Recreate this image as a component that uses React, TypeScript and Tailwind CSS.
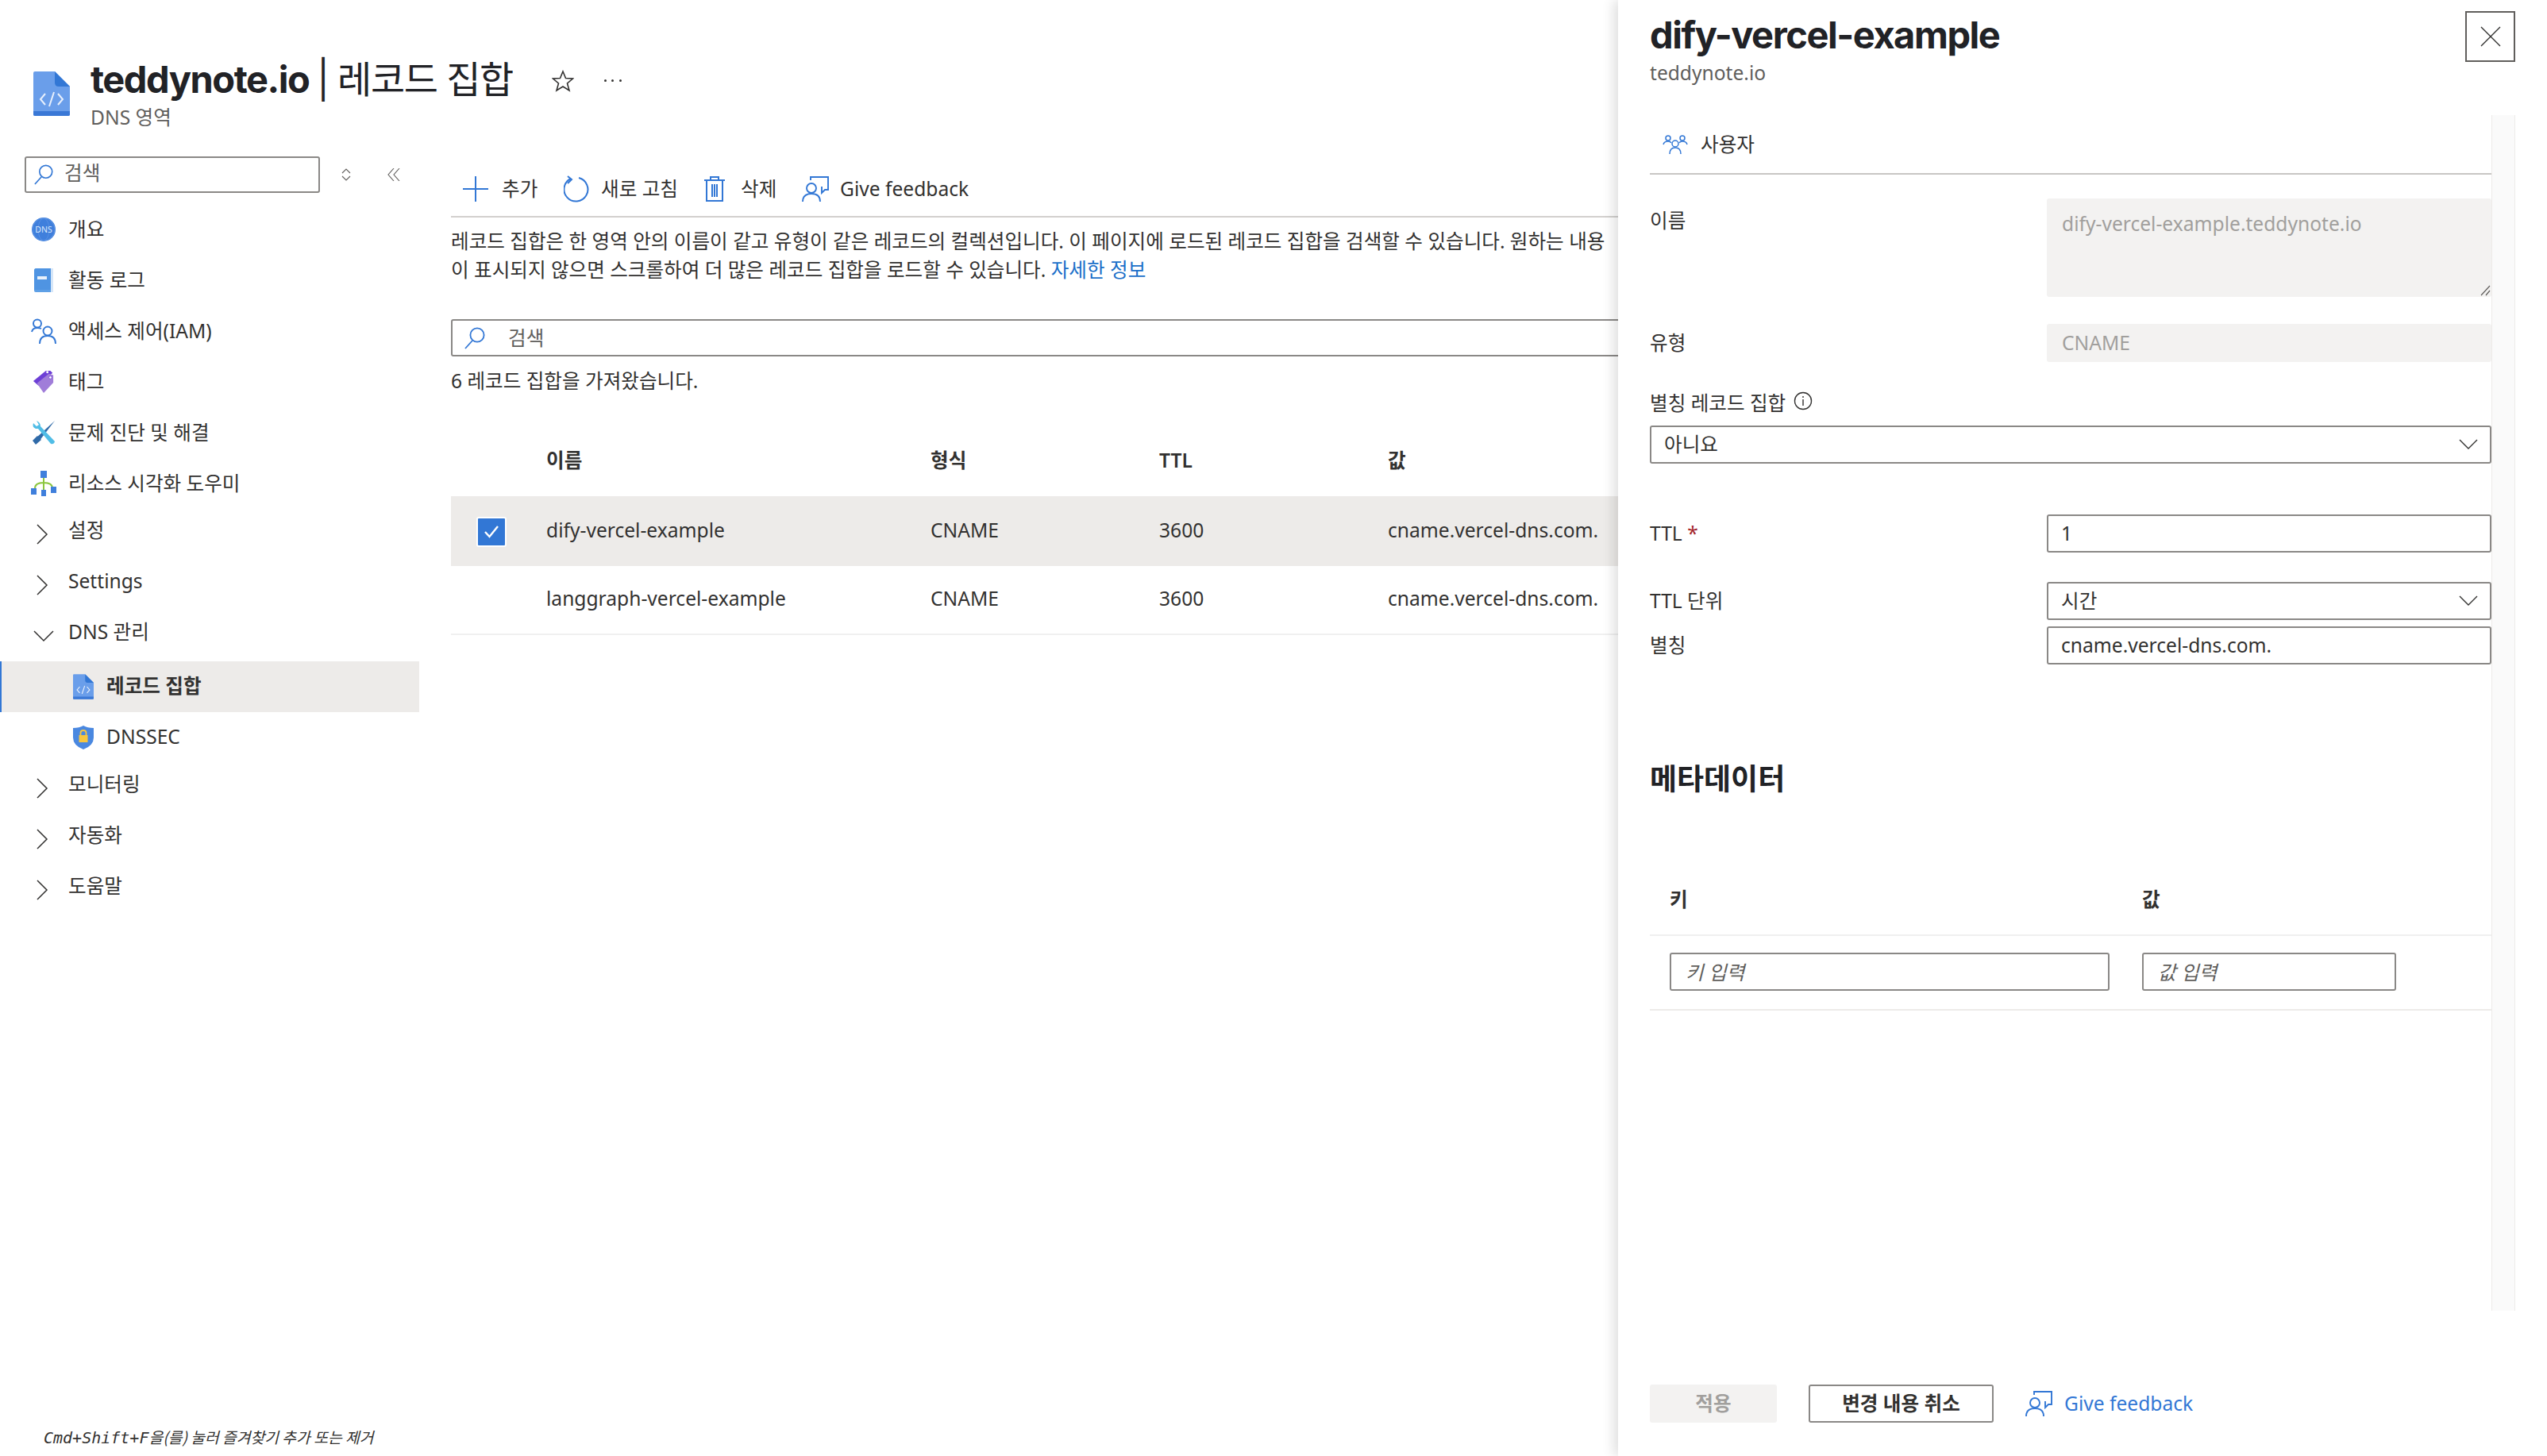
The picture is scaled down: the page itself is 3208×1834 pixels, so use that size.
import React from 'react';

const BLUE = '#3277d5';

function Magnifier({ className }: { className?: string }) {
  return (
    <svg viewBox="0 0 26 28" className={className} fill="none" stroke={BLUE} strokeWidth="1.8">
      <circle cx="16" cy="10" r="8.6" />
      <path d="M10 17 L1 27" />
    </svg>
  );
}

function Chevron({ dir, className }: { dir: 'right' | 'down'; className?: string }) {
  return (
    <svg viewBox="0 0 26 26" className={className} fill="none" stroke="#323130" strokeWidth="1.5">
      {dir === 'right' ? <path d="M7 1 L19 13 L7 25" /> : <path d="M1 7 L13 19 L25 7" />}
    </svg>
  );
}

function RecordIcon({ className }: { className?: string }) {
  return (
    <svg viewBox="0 0 46 56" className={className}>
      <path d="M0 2 Q0 0 2 0 H27 L46 19 V54 Q46 56 44 56 H2 Q0 56 0 54 Z" fill="#6a9eea" />
      <path d="M0 50 H46 V54 Q46 56 44 56 H2 Q0 56 0 54 Z" fill="#3a78d6" />
      <path d="M27 0 L46 19 H32 Q27 19 27 14 Z" fill="#3277d5" />
      <path d="M15 28 L9 35 L15 42 M31 28 L37 35 L31 42 M26 26 L20 44" fill="none" stroke="#e8f0fc" strokeWidth="2" />
    </svg>
  );
}

function DnsIcon() {
  return (
    <svg viewBox="0 0 30 30" className="w-[30px] h-[30px]">
      <circle cx="15" cy="15" r="15" fill="#3f7fdc" />
      <circle cx="15" cy="15" r="14" fill="none" stroke="#5b93e4" strokeWidth="1" />
      <ellipse cx="15" cy="15" rx="7" ry="14" fill="none" stroke="#5b93e4" strokeWidth="0.8" />
      <text x="15" y="19" textAnchor="middle" fontSize="10.5" fill="#dce9fb" fontFamily="Noto Sans, sans-serif">DNS</text>
    </svg>
  );
}

function BookIcon() {
  return (
    <svg viewBox="0 0 26 30" className="w-[26px] h-[30px]">
      <path d="M1 3 Q1 0 4 0 H25 V30 H3 Q1 30 1 28 Z" fill="#5ea0e6" />
      <path d="M4 0 H25 V30 H22 V2 H4 Z" fill="#d5e6f8" />
      <path d="M1 3 Q1 0 4 0 H22 V27 H1 Z" fill="#4f94e2" />
      <rect x="5" y="10" width="12" height="4" fill="#e8f1fb" />
    </svg>
  );
}

function PeopleIcon() {
  return (
    <svg viewBox="0 0 32 32" className="w-[32px] h-[32px]" fill="none" stroke={BLUE} strokeWidth="1.9">
      <circle cx="8" cy="6.5" r="5" />
      <path d="M1 17 Q2 12 8 12 Q11 12 13 13" />
      <circle cx="21" cy="16" r="5.5" />
      <path d="M11 32 Q11 22 21 22 Q31 22 31 32" />
    </svg>
  );
}

function TagIcon() {
  return (
    <svg viewBox="0 0 30 32" className="w-[28px] h-[30px]">
      <path d="M1 15 L18 1 L24 1 L27 4 L8 21 Z" fill="#6d3fd6" />
      <path d="M6 18 L22 5 L28 7 L28 17 L15 31 Z" fill="#a07dd9" />
      <circle cx="24" cy="10" r="2" fill="#fff" stroke="#6d3fd6" strokeWidth="0.8" />
      <circle cx="20" cy="3" r="1.6" fill="#fff" />
    </svg>
  );
}

function ToolsIcon() {
  return (
    <svg viewBox="0 0 30 30" className="w-[30px] h-[30px]">
      <path d="M29 0 L5 22 L9 26 Z" fill="#2f6aa8" />
      <path d="M1 25 L7 19 L12 24 L5 30 Z" fill="#2f6aa8" />
      <path d="M2 3 Q0 8 5 10 L8 10 L24 29 Q28 30 29 26 L11 7 Q11 2 6 0 L9 5 L6 7 Z" fill="#50bde6" />
    </svg>
  );
}

function TreeIcon() {
  return (
    <svg viewBox="0 0 32 32" className="w-[32px] h-[32px]">
      <path d="M16 8 V25 M5 22 Q5 15 16 15 Q27 15 27 22" fill="none" stroke="#8cc63f" strokeWidth="2" />
      <rect x="12" y="0" width="8" height="9" fill="#3f7fdc" />
      <rect x="0" y="22" width="7" height="8" fill="#3f7fdc" />
      <rect x="25" y="20" width="7" height="8" fill="#3f7fdc" />
      <rect x="13" y="24" width="6" height="8" fill="#3f7fdc" />
    </svg>
  );
}

function ShieldIcon() {
  return (
    <svg viewBox="0 0 26 30" className="w-[26px] h-[30px]">
      <path d="M13 0 Q18 3 26 3 V15 Q26 25 13 30 Q0 25 0 15 V3 Q8 3 13 0 Z" fill="#4a88e0" />
      <rect x="7.5" y="12" width="11" height="9" fill="#f8c63d" />
      <path d="M9.5 12 V9 Q9.5 6 13 6 Q16.5 6 16.5 9 V12" fill="none" stroke="#f8c63d" strokeWidth="1.8" />
    </svg>
  );
}

function FeedbackIcon({ className }: { className?: string }) {
  return (
    <svg viewBox="0 0 34 32" className={className} fill="none" stroke={BLUE} strokeWidth="1.9">
      <circle cx="12" cy="15" r="6" />
      <path d="M1 32 Q1 22 12 22 Q23 22 23 32" />
      <path d="M11 5 V1 H33 V17 H29 L25 21 V13" />
    </svg>
  );
}

function UsersIcon() {
  return (
    <svg viewBox="0 0 32 24" className="w-[32px] h-[24px]" fill="none" stroke={BLUE} strokeWidth="1.5">
      <circle cx="7" cy="4" r="3" />
      <path d="M1 12 Q2 8 7 8 Q10 8 11 10" />
      <circle cx="25" cy="4" r="3" />
      <path d="M31 12 Q30 8 25 8 Q22 8 21 10" />
      <circle cx="16" cy="11" r="4" />
      <path d="M9 24 Q9 16 16 16 Q23 16 23 24" />
    </svg>
  );
}

const navRows = [
  { label: '개요', icon: <DnsIcon /> },
  { label: '활동 로그', icon: <BookIcon /> },
  { label: '액세스 제어(IAM)', icon: <PeopleIcon /> },
  { label: '태그', icon: <TagIcon /> },
  { label: '문제 진단 및 해결', icon: <ToolsIcon /> },
  { label: '리소스 시각화 도우미', icon: <TreeIcon /> },
  { label: '설정', chevron: 'right' as const },
  { label: 'Settings', chevron: 'right' as const },
  { label: 'DNS 관리', chevron: 'down' as const },
  { label: '레코드 집합', sub: true, selected: true, icon: <RecordIcon className="w-[26px] h-[32px]" /> },
  { label: 'DNSSEC', sub: true, icon: <ShieldIcon /> },
  { label: '모니터링', chevron: 'right' as const },
  { label: '자동화', chevron: 'right' as const },
  { label: '도움말', chevron: 'right' as const },
];

function Sidebar() {
  return (
    <div className="w-[528px] shrink-0 flex flex-col">
      <div className="flex items-center h-[46px] pl-[31px]">
        <div className="w-[372px] h-[46px] border-2 border-[#8a8886] rounded-[3px] flex items-center pl-[10px]">
          <Magnifier className="w-[24px] h-[26px]" />
          <span className="ml-[14px] -mt-[5px] text-[#605e5c]">검색</span>
        </div>
        <svg viewBox="0 0 12 16" className="w-[12px] h-[16px] ml-[27px]" fill="none" stroke="#605e5c" strokeWidth="1.1">
          <path d="M1 6 L6 1 L11 6 M1 10 L6 15 L11 10" />
        </svg>
        <svg viewBox="0 0 16 16" className="w-[16px] h-[16px] ml-[46px]" fill="none" stroke="#605e5c" strokeWidth="1.1">
          <path d="M8 0 L1 8 L8 16 M15 0 L8 8 L15 16" />
        </svg>
      </div>
      <div className="mt-[14px] flex flex-col">
        {navRows.map((row) => (
          <div
            key={row.label}
            className={
              row.selected
                ? 'h-[64px] flex items-center bg-[#edebe9] border-l-2 border-[#3277d5] pl-[86px] font-semibold'
                : row.sub
                  ? 'h-[64px] flex items-center pl-[88px]'
                  : 'h-[64px] flex items-center pl-[38px]'
            }
          >
            <span className="w-[34px] flex justify-center shrink-0">
              {row.chevron ? (
                <Chevron
                  dir={row.chevron}
                  className={row.chevron === 'right' ? 'w-[26px] h-[26px] mr-[5px]' : 'w-[26px] h-[26px]'}
                />
              ) : (
                row.icon
              )}
            </span>
            <span className={row.sub ? 'ml-[12px] -mt-[3px]' : row.chevron ? 'ml-[14px] -mt-[10px]' : 'ml-[14px] -mt-[1px]'}>
              {row.label}
            </span>
          </div>
        ))}
      </div>
      <div className="mt-auto mb-[13px] pl-[55px] text-[20px] leading-[20px] italic whitespace-nowrap font-['DejaVu_Sans_Mono','Noto_Sans_CJK_KR',monospace] text-[#323130]">
        Cmd+Shift+F<span className="text-[19.300px] font-['Noto_Sans_CJK_KR',sans-serif]">을(를) 눌러 즐겨찾기 추가 또는 제거</span>
      </div>
    </div>
  );
}

function RecordTable() {
  const rows = [
    { name: 'dify-vercel-example', selected: true },
    { name: 'langgraph-vercel-example', selected: false },
  ];
  return (
    <div className="w-[1600px] mt-[37px]">
      <div className="h-[90px] pb-[1px] flex items-center font-semibold">
        <span className="ml-[120px] w-[484px]">이름</span>
        <span className="w-[288px]">형식</span>
        <span className="w-[288px]">TTL</span>
        <span>값</span>
      </div>
      {rows.map((r) => (
        <div
          key={r.name}
          className={
            r.selected
              ? 'h-[88px] flex items-center bg-[#edebe9]'
              : 'h-[87px] flex items-center border-b-2 border-[#f0f0f0]'
          }
        >
          <span className="w-[120px] pl-[32px] mt-[2px] shrink-0">
            {r.selected && (
              <span className="w-[38px] h-[38px] rounded-[3px] bg-[#3277d5] border-2 border-white flex items-center justify-center">
                <svg viewBox="0 0 18 16" className="w-[18px] h-[16px]" fill="none" stroke="#fff" strokeWidth="2.4">
                  <path d="M1 8 L6.5 14 L17 1" />
                </svg>
              </span>
            )}
          </span>
          <span className="w-[484px] -mt-[3px]">{r.name}</span>
          <span className="w-[288px] -mt-[3px]">CNAME</span>
          <span className="w-[288px] -mt-[3px]">3600</span>
          <span className="-mt-[3px]">cname.vercel-dns.com.</span>
        </div>
      ))}
    </div>
  );
}

function Content() {
  return (
    <div className="flex-1 min-w-0 pl-[40px] overflow-hidden">
      <div className="h-[77px] pt-[6px] w-[1600px] border-b-2 border-[#d2d0ce] flex items-center">
        <svg viewBox="0 0 32 32" className="w-[32px] h-[32px] ml-[15px]" fill="none" stroke={BLUE} strokeWidth="2">
          <path d="M16 0 V32 M0 16 H32" />
        </svg>
        <span className="ml-[17px] w-[76px]">추가</span>
        <svg viewBox="0 0 32 34" className="w-[32px] h-[34px] ml-[2px]" fill="none" stroke={BLUE} strokeWidth="2">
          <path d="M19 3 A15 15 0 1 1 9 4" />
          <path d="M5 1 L10 5 L5 10" />
        </svg>
        <span className="ml-[15px] w-[130px]">새로 고침</span>
        <svg viewBox="0 0 26 32" className="w-[26px] h-[32px]" fill="none" stroke={BLUE} strokeWidth="2">
          <path d="M0 5 H26 M8 5 V1 H18 V5 M3 5 V31 H23 V5 M10 10 V26 M13 10 V26 M16 10 V26" />
        </svg>
        <span className="ml-[20px] w-[77px]">삭제</span>
        <FeedbackIcon className="w-[34px] h-[32px]" />
        <span className="ml-[14px]">Give feedback</span>
      </div>
      <div className="mt-[12px] leading-[36px] whitespace-nowrap">
        <div>레코드 집합은 한 영역 안의 이름이 같고 유형이 같은 레코드의 컬렉션입니다. 이 페이지에 로드된 레코드 집합을 검색할 수 있습니다. 원하는 내용</div>
        <div>
          이 표시되지 않으면 스크롤하여 더 많은 레코드 집합을 로드할 수 있습니다.{' '}
          <span className="text-[#1a6fc9]">자세한 정보</span>
        </div>
      </div>
      <div className="w-[1600px] h-[47px] mt-[44px] border-2 border-[#8a8886] rounded-[3px] flex items-center pl-[15px]">
        <Magnifier className="w-[26px] h-[28px]" />
        <span className="ml-[29px] text-[#605e5c]">검색</span>
      </div>
      <div className="mt-[13px] leading-[36px]">6 레코드 집합을 가져왔습니다.</div>
      <RecordTable />
    </div>
  );
}

function Field({ label, children, className }: { label: React.ReactNode; children: React.ReactNode; className?: string }) {
  return (
    <div className={`flex items-start ${className ?? ''}`}>
      <div className="w-[500px] shrink-0 h-[48px] flex items-center">{label}</div>
      <div className="w-[560px]">{children}</div>
    </div>
  );
}

function Box({ children, chevron, className }: { children?: React.ReactNode; chevron?: boolean; className?: string }) {
  return (
    <div className={`h-[48px] border-2 border-[#8a8886] rounded-[3px] flex items-center justify-between px-[16px] ${className ?? ''}`}>
      <span>{children}</span>
      {chevron && (
        <svg viewBox="0 0 24 14" className="w-[24px] h-[14px] -mr-[1px]" fill="none" stroke="#323130" strokeWidth="1.4">
          <path d="M1 1 L12 12 L23 1" />
        </svg>
      )}
    </div>
  );
}

function DetailPanel() {
  return (
    <div className="w-[1170px] shrink-0 bg-white shadow-[-6px_0_14px_rgba(0,0,0,0.12)] flex flex-col pl-[40px] relative">
      <div className="h-[145px] flex items-start justify-between pr-[40px]">
        <div>
          <div className="mt-[16px] text-[47px] leading-[56px] font-bold tracking-[-1.45px] text-[#212226] font-['Inter',sans-serif]">
            dify-vercel-example
          </div>
          <div className="mt-[4px] text-[#605e5c] leading-[32px]">teddynote.io</div>
        </div>
        <button className="w-[63px] h-[64px] mt-[14px] border-2 border-[#605e5c] flex items-center justify-center">
          <svg viewBox="0 0 26 26" className="w-[26px] h-[26px]" fill="none" stroke="#323130" strokeWidth="1.4">
            <path d="M1 1 L25 25 M25 1 L1 25" />
          </svg>
        </button>
      </div>
      <div className="flex h-[1506px]">
        <div className="w-[1060px] shrink-0">
          <div className="h-[75px] border-b-2 border-[#c8c6c4] flex items-center pl-[16px]">
            <UsersIcon />
            <span className="ml-[16px]">사용자</span>
          </div>
          <div className="flex items-start mt-[30px]">
            <div className="w-[500px] shrink-0 pt-[10px] leading-[36px]">이름</div>
            <div className="w-[560px] h-[124px] bg-[#f3f2f1] rounded-[3px] px-[19px] pt-[14px] leading-[36px] text-[#a19f9d] relative">
              dify-vercel-example.teddynote.io
              <svg viewBox="0 0 14 14" className="absolute right-[1px] bottom-[1px] w-[14px] h-[14px]" fill="none" stroke="#605e5c" strokeWidth="1.2">
                <path d="M2 13 L13 1 M8 13 L13 7" />
              </svg>
            </div>
          </div>
          <Field label="유형" className="mt-[34px]">
            <div className="h-[48px] bg-[#f3f2f1] rounded-[3px] px-[19px] flex items-center text-[#a19f9d]">CNAME</div>
          </Field>
          <div className="mt-[28px] mb-[4px] h-[48px] flex items-center">
            별칭 레코드 집합
            <svg viewBox="0 0 24 24" className="w-[24px] h-[24px] ml-[10px] -mt-[6px]" fill="none" stroke="#323130" strokeWidth="1.4">
              <circle cx="12" cy="12" r="10.5" />
              <path d="M12 10 V18 M12 6 V8" />
            </svg>
          </div>
          <Box chevron>아니요</Box>
          <Field label={<span>TTL <span className="text-[#a4262c]">*</span></span>} className="mt-[64px]">
            <Box>1</Box>
          </Field>
          <Field label="TTL 단위" className="mt-[37px]">
            <Box chevron>시간</Box>
          </Field>
          <Field label="별칭" className="mt-[8px]">
            <Box>cname.vercel-dns.com.</Box>
          </Field>
          <div className="mt-[114px] text-[37px] leading-[60px] font-bold text-[#212226]">메타데이터</div>
          <div className="mt-[108px] h-[60px] flex items-start font-semibold border-b-2 border-[#f0f0f0]">
            <span className="ml-[25px] w-[595px] leading-[36px] -mt-[4px]">키</span>
            <span className="leading-[36px] -mt-[4px]">값</span>
          </div>
          <div className="h-[94px] border-b-2 border-[#edebe9] flex items-start pt-[21px] pl-[25px]">
            <div className="w-[554px] h-[48px] border-2 border-[#8a8886] rounded-[3px] flex items-center pl-[18px] pt-[2px] italic text-[#605e5c]">키 입력</div>
            <div className="w-[320px] h-[48px] ml-[41px] border-2 border-[#8a8886] rounded-[3px] flex items-center pl-[18px] pt-[2px] italic text-[#605e5c]">값 입력</div>
          </div>
        </div>
        <div className="w-[30px] bg-[#fafafa] border-x border-[#edebe9]" />
      </div>
      <div className="flex items-center mt-[93px]">
        <div className="w-[160px] h-[48px] bg-[#f3f2f1] rounded-[3px] flex items-center justify-center text-[#a19f9d] font-semibold">적용</div>
        <div className="w-[233px] h-[48px] ml-[40px] border-2 border-[#8a8886] rounded-[3px] flex items-center justify-center font-semibold">변경 내용 취소</div>
        <FeedbackIcon className="w-[34px] h-[32px] ml-[40px]" />
        <span className="ml-[15px] text-[#3277d5]">Give feedback</span>
      </div>
    </div>
  );
}

export default function App() {
  return (
    <div className="w-[3208px] h-[1834px] bg-white overflow-hidden flex text-[24.6px] leading-[32px] text-[#323130] font-['Noto_Sans','Noto_Sans_CJK_KR',sans-serif]">
      <div className="w-[2038px] shrink-0 flex flex-col">
        <div className="h-[197px] shrink-0 flex items-start pl-[42px] pt-[90px]">
          <RecordIcon className="w-[46px] h-[56px]" />
          <div className="ml-[26px] -mt-[22px]">
            <div className="flex items-center">
              <span className="text-[47px] leading-[64px] font-bold tracking-[-1.45px] text-[#212226] font-['Inter','Noto_Sans_CJK_KR',sans-serif] whitespace-nowrap">
                teddynote.io <span className="font-normal">| 레코드 집합</span>
              </span>
              <svg viewBox="0 0 28 28" className="w-[28px] h-[28px] ml-[49px] mt-[4px]" fill="none" stroke="#323130" strokeWidth="1.6">
                <path d="M14 2 L17.5 10.5 L26.5 11 L19.5 17 L22 26 L14 21 L6 26 L8.500 17 L1.500 11 L10.500 10.500 Z" />
              </svg>
              <span className="ml-[38px] mt-[2px] w-[22px] flex justify-between">
                <span className="w-[3px] h-[3px] rounded-full bg-[#323130]" />
                <span className="w-[3px] h-[3px] rounded-full bg-[#323130]" />
                <span className="w-[3px] h-[3px] rounded-full bg-[#323130]" />
              </span>
            </div>
            <div className="text-[#605e5c] mt-0 leading-[32px]">DNS 영역</div>
          </div>
        </div>
        <div className="flex-1 flex min-h-0">
          <Sidebar />
          <Content />
        </div>
      </div>
      <DetailPanel />
    </div>
  );
}
